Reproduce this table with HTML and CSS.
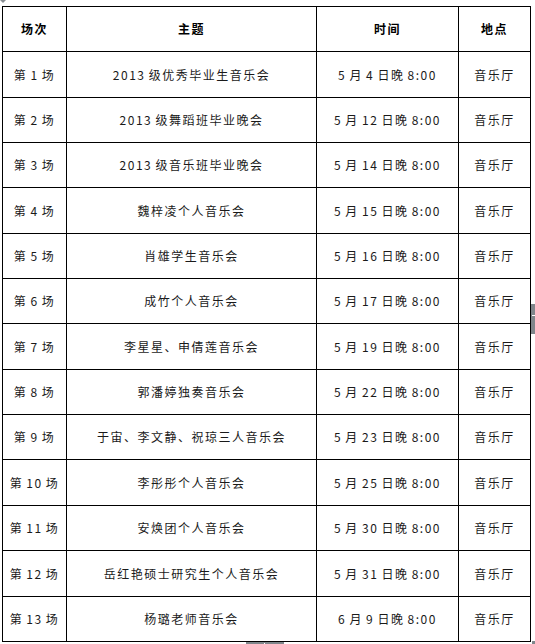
FILE: index.html
```html
<!DOCTYPE html>
<html lang="zh">
<head>
<meta charset="utf-8">
<title>音乐会安排</title>
<link rel="stylesheet" href="styles.css">
</head>
<body>
<div class="page">
  <span class="handle"></span>
  <table class="schedule">
    <colgroup>
      <col class="c1"><col class="c2"><col class="c3"><col class="c4">
    </colgroup>
    <thead>
      <tr class="r45"><th>场次</th><th>主题</th><th>时间</th><th>地点</th></tr>
    </thead>
    <tbody>
      <tr class="r46"><td>第 1 场</td><td>2013 级优秀毕业生音乐会</td><td>5 月 4 日晚 8:00</td><td>音乐厅</td></tr>
      <tr class="r45"><td>第 2 场</td><td>2013 级舞蹈班毕业晚会</td><td>5 月 12 日晚 8:00</td><td>音乐厅</td></tr>
      <tr class="r45"><td>第 3 场</td><td>2013 级音乐班毕业晚会</td><td>5 月 14 日晚 8:00</td><td>音乐厅</td></tr>
      <tr class="r46"><td>第 4 场</td><td>魏梓凌个人音乐会</td><td>5 月 15 日晚 8:00</td><td>音乐厅</td></tr>
      <tr class="r45"><td>第 5 场</td><td>肖雄学生音乐会</td><td>5 月 16 日晚 8:00</td><td>音乐厅</td></tr>
      <tr class="r45"><td>第 6 场</td><td>成竹个人音乐会</td><td>5 月 17 日晚 8:00</td><td>音乐厅</td></tr>
      <tr class="r46"><td>第 7 场</td><td>李星星、申倩莲音乐会</td><td>5 月 19 日晚 8:00</td><td>音乐厅</td></tr>
      <tr class="r45"><td>第 8 场</td><td>郭潘婷独奏音乐会</td><td>5 月 22 日晚 8:00</td><td>音乐厅</td></tr>
      <tr class="r45"><td>第 9 场</td><td>于宙、李文静、祝琼三人音乐会</td><td>5 月 23 日晚 8:00</td><td>音乐厅</td></tr>
      <tr class="r46"><td>第 10 场</td><td>李彤彤个人音乐会</td><td>5 月 25 日晚 8:00</td><td>音乐厅</td></tr>
      <tr class="r45"><td>第 11 场</td><td>安焕团个人音乐会</td><td>5 月 30 日晚 8:00</td><td>音乐厅</td></tr>
      <tr class="r46"><td>第 12 场</td><td>岳红艳硕士研究生个人音乐会</td><td>5 月 31 日晚 8:00</td><td>音乐厅</td></tr>
      <tr class="r45"><td>第 13 场</td><td>杨璐老师音乐会</td><td>6 月 9 日晚 8:00</td><td>音乐厅</td></tr>
    </tbody>
  </table>
  <span class="vscroll"><span class="tick"></span></span>
  <span class="hscroll"><span class="dot"></span></span>
  <span class="corner"></span>
</div>
</body>
</html>
```

FILE: styles.css
```css
html, body {
  margin: 0;
  padding: 0;
  background: #fff;
}

.page {
  position: relative;
  width: 535px;
  height: 644px;
  overflow: hidden;
  padding: 6px 0 0 2px;
  box-sizing: border-box;
}

.schedule {
  border-collapse: collapse;
  table-layout: fixed;
  width: 529px;
  font-family: "Noto Sans CJK SC", "Liberation Sans", sans-serif;
  font-size: 12px;
  letter-spacing: 1.5px;
  word-spacing: -1px;
  color: #1a1a1a;
}

.c1 { width: 64px; }
.c2 { width: 250px; }
.c3 { width: 142px; }
.c4 { width: 72px; }

.schedule th,
.schedule td {
  border: 1px solid #000;
  padding: 0;
  text-align: center;
  vertical-align: middle;
  line-height: 14px;
}

.schedule th {
  font-weight: bold;
  color: #000;
}

.r45 { height: 45px; }
.r46 { height: 46px; }

.handle {
  position: absolute;
  left: 0;
  top: 0;
  width: 0;
  height: 0;
  border-left: 3px solid transparent;
  border-right: 3px solid transparent;
  border-top: 3px solid #8a8f94;
}

.vscroll {
  position: absolute;
  left: 531px;
  top: 304px;
  width: 4px;
  height: 30px;
  background: #80868b;
}

.vscroll .tick {
  position: absolute;
  left: 1px;
  top: 11px;
  width: 3px;
  height: 1px;
  background: #fff;
}

.hscroll {
  position: absolute;
  left: 246px;
  top: 642px;
  width: 38px;
  height: 2px;
  background: #80868b;
}

.hscroll .dot {
  position: absolute;
  left: 18px;
  top: 1px;
  width: 1px;
  height: 1px;
  background: #fff;
}

.corner {
  position: absolute;
  left: 532px;
  top: 641px;
  width: 3px;
  height: 3px;
  background: #80868b;
}
```
